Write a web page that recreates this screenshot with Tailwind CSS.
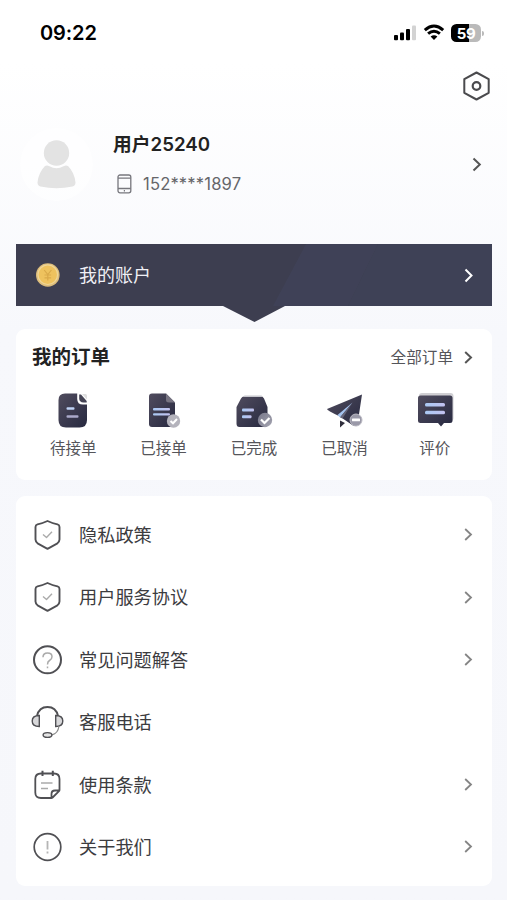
<!DOCTYPE html>
<html lang="zh-CN">
<head>
<meta charset="utf-8">
<meta name="viewport" content="width=device-width, initial-scale=1">
<title>我的</title>
<script src="https://cdn.jsdelivr.net/npm/@tailwindcss/browser@4"></script>
</head>
<body class="h-[900px] w-[507px] overflow-hidden bg-[#f6f7fb] font-['Inter','Noto_Sans_CJK_SC',sans-serif] text-[#333]">
<svg class="absolute h-0 w-0" aria-hidden="true">
  <defs>
    <linearGradient id="dark" x1="0" y1="0" x2="1" y2="1"><stop offset="0" stop-color="#504c5e"/><stop offset="1" stop-color="#272940"/></linearGradient>
    <linearGradient id="line" x1="0" y1="0" x2="1" y2="0"><stop offset="0" stop-color="#a9c9f3"/><stop offset="1" stop-color="#c3c2ef"/></linearGradient>
    <linearGradient id="badge" x1="0" y1="0" x2="1" y2="1"><stop offset="0" stop-color="#77778a"/><stop offset="1" stop-color="#a5a5b1"/></linearGradient>
  </defs>
</svg>
<div class="flex h-full flex-col bg-linear-to-b from-white from-[7%] via-[#f7f8fc] via-[37%] to-[#f6f7fb]">
  <header class="flex h-[66px] shrink-0 items-center justify-between pl-10 pr-[23px]">
    <div class="text-[20px] leading-6 font-semibold tracking-[-0.1px] text-black">09:22</div>
    <div class="flex items-center">
      <svg class="h-[18px] w-[24px]" viewBox="0 0 24 18"><rect x="1" y="11" width="4" height="5.2" rx="1"/><rect x="7" y="8.5" width="4" height="7.7" rx="1"/><rect x="13" y="5" width="4" height="11.2" rx="1"/><rect x="19" y="1.5" width="4" height="14.7" rx="1" fill="#d3d3d3"/></svg>
      <svg class="ml-[6px] h-[18px] w-[22px]" viewBox="0 0 22 18" fill="none" stroke="#000" stroke-width="3"><path d="M1.8 6.1Q11-2 20.2 6.1M5.1 9.7Q11 4.8 16.9 9.7"/><path d="M7.6 12.5Q11 9.8 14.4 12.5L11 16Z" fill="#000" stroke="none"/></svg>
      <div class="ml-[6px] flex h-[18px] w-[30px] items-center justify-center rounded-[5.5px] bg-linear-to-r from-black from-[59%] to-[#bababa] to-[59%] text-[15px] font-bold leading-none tracking-[-0.3px] text-white">59</div>
      <div class="ml-px h-[5px] w-[2px] rounded-r-full bg-[#bababa]"></div>
    </div>
  </header>

  <div class="flex h-[40px] shrink-0 items-center justify-end pr-[16px]">
    <svg class="h-[30px] w-[29px]" viewBox="0 0 29 30" fill="none" stroke="#4a4a4d" stroke-width="2" stroke-linejoin="round"><path d="M14.5 1.5L26.7 8.2V21.8L14.5 28.5L2.3 21.8V8.2Z"/><circle cx="14.5" cy="15" r="3.8" stroke-width="2.2"/></svg>
  </div>

  <section class="flex h-[138px] shrink-0 items-start pl-[20px] pr-[22px] pt-[22px]">
    <div class="flex h-[73px] w-[73px] items-center justify-center rounded-full bg-white/60">
      <svg class="h-[50px] w-[40px]" viewBox="0 0 40 50" fill="#e3e3e3"><circle cx="19.5" cy="13" r="12.7"/><path d="M8 26Q10 25 12.5 26.2Q19.5 30.5 26.5 26.2Q29 25 31 26Q37.5 32.5 38.5 42.5Q38.5 45.5 35.5 46.5Q19.5 50 3.5 46.5Q.5 45.5 .5 42.5Q1.5 32.5 8 26Z"/></svg>
    </div>
    <div class="ml-5 flex grow flex-col pt-[3px]">
      <div class="text-[18.7px] font-semibold leading-7 tracking-[0.05px] text-[#222]">用户25240</div>
      <div class="mt-[11px] flex h-[28px] items-center">
        <svg class="ml-[4px] h-5 w-[15px]" viewBox="0 0 15 20" fill="none" stroke="#77777d" stroke-width="1.3"><rect x="1" y="1" width="12.8" height="17.8" rx="2"/><path d="M1 4.2H13.8M1 14.5H13.8"/><path d="M6.8 16.7H8" stroke-width="1.6"/></svg>
        <span class="ml-[11px] text-[16.6px] leading-6 tracking-[0.15px] text-[#66666a]">152****1897</span>
      </div>
    </div>
    <svg class="mt-[29px] h-[15px] w-[16px]" viewBox="0 0 16 15" fill="none" stroke="#555" stroke-width="2"><path d="M4.5 1.5L10.8 7.5L4.5 13.5"/></svg>
  </section>

  <section class="relative mx-4 h-[62px] shrink-0">
    <svg class="absolute left-0 top-0 h-[78px] w-[476px]" viewBox="0 0 476 78"><path d="M0 0H476V62H269L238.5 78L207 62H0Z" fill="#3d3e50"/><path d="M290 0H362L332 62H257Z" fill="#41435a" opacity=".65"/><path d="M362 0H476V62H332Z" fill="#40455a" opacity=".6"/></svg>
    <div class="relative flex h-full items-center pl-[19px] pr-[15px]">
      <svg class="h-[26px] w-[26px]" viewBox="0 0 26 26"><circle cx="12.8" cy="13" r="11.8" fill="#ddbd7c"/><circle cx="12.8" cy="12.7" r="9.8" fill="#eec25e" stroke="#efd697" stroke-width="1.2"/><path d="M9.2 8L12.8 12.5L16.4 8M12.8 12.5V18.5M9.5 13H16.1M9.5 15.8H16.1" fill="none" stroke="#d9a94a" stroke-width="1.2"/></svg>
      <span class="ml-[18px] grow pt-[2px] text-[18px] leading-7 text-[#f0f0f6]">我的账户</span>
      <svg class="h-[15px] w-[16px]" viewBox="0 0 16 15" fill="none" stroke="#fff" stroke-width="2"><path d="M5.5 1.5L11.5 7.5L5.5 13.5"/></svg>
    </div>
  </section>

  <section class="ml-4 mr-[15px] mt-[23px] h-[151px] shrink-0 rounded-[9px] bg-white px-[12px]">
    <div class="flex h-[56px] items-center pl-[4px] pr-[4px]">
      <h2 class="grow text-[19.5px] font-bold leading-7 text-[#222]">我的订单</h2>
      <span class="pt-px text-[15.6px] leading-6 text-[#55555a]">全部订单</span>
      <svg class="ml-[7px] h-[15px] w-[16px]" viewBox="0 0 16 15" fill="none" stroke="#555" stroke-width="2"><path d="M5.2 2L11 7.5L5.2 13"/></svg>
    </div>
    <div class="grid grid-cols-5 text-center text-[15.5px] leading-6 text-[#55555a]">
      <div class="flex flex-col items-center gap-1 pt-[4px]">
        <svg class="h-[44px] w-[44px]" viewBox="0 0 44 44"><path d="M14 4.5H30Q36 7 36 13V31Q36 38.5 28.5 38.5H15Q7.5 38.5 7.5 31V11Q7.5 4.5 14 4.5Z" fill="url(#dark)"/><path d="M26.2 4H36.5V15.5H32Q26.2 15.5 26.2 10Z" fill="#fff"/><path d="M28.2 5.5H30L35.7 12V13.6H32.5Q28.2 13.2 28.2 9.5Z" fill="#454455"/><path d="M31 5H34.5Q36 5 36 6.5V10.5Z" fill="#dededf"/><rect x="15.5" y="18.3" width="8" height="2.4" rx="1" fill="#bfd2f5"/><rect x="15.5" y="26.3" width="12" height="2.4" rx="1" fill="#aaa9ca"/></svg>
        <span>待接单</span>
      </div>
      <div class="flex flex-col items-center gap-1 pt-[4px]">
        <svg class="h-[44px] w-[44px]" viewBox="0 0 44 44"><path d="M10 4.5H24L33 13.5V35Q33 38 30 38H10Q7 38 7 35V7.5Q7 4.5 10 4.5Z" fill="url(#dark)"/><path d="M24 4.5V11Q24 13.5 27 13.5H33Z" fill="#777482"/><rect x="11" y="19" width="17" height="2.4" rx="1" fill="url(#line)"/><rect x="11" y="24.2" width="17" height="2.4" rx="1" fill="url(#line)"/><circle cx="31.5" cy="32" r="6.7" fill="#b4b3bc"/><path d="M28.5 32L31 34.3L35 30" fill="none" stroke="#fff" stroke-width="2"/></svg>
        <span>已接单</span>
      </div>
      <div class="flex flex-col items-center gap-1 pt-[4px]">
        <svg class="h-[44px] w-[44px]" viewBox="0 0 44 44"><path d="M12 7.5H29Q31 7.5 32 9.5L35.5 18V34.5Q35.5 38 32.5 38H7.5Q4.5 38 4.5 34.5V18L9 9.5Q10 7.5 12 7.5Z" fill="url(#dark)"/><path d="M11 8L12.5 6.5H29.5L31 8Z" fill="#c8c8ce"/><rect x="10" y="19.5" width="12" height="3" rx="1" fill="url(#line)"/><rect x="10" y="26.3" width="9.5" height="3" rx="1" fill="url(#line)"/><circle cx="33" cy="31" r="7.2" fill="url(#badge)"/><path d="M29 30.5L32.5 34L37.5 29" fill="none" stroke="#fff" stroke-width="2.2"/></svg>
        <span>已完成</span>
      </div>
      <div class="flex flex-col items-center gap-1 pt-[4px]">
        <svg class="h-[44px] w-[44px]" viewBox="0 0 44 44"><path d="M40 5.5L5 20Q5 21.5 17 27L31 36.5Q35 38.5 35.7 34Z" fill="url(#dark)"/><path d="M30.5 13.5L15.5 26L18 28.5Z" fill="#a5c3ee"/><path d="M30.5 13.5L18 28.5L20.5 29.5Z" fill="#666579"/><path d="M18 31.5L23 34L18 38.5Z" fill="#302f3d"/><circle cx="34" cy="31" r="6" fill="#9a99a8" stroke="#bcbbc4"/><rect x="30" y="29.5" width="8" height="2.8" rx=".6" fill="#fff"/></svg>
        <span>已取消</span>
      </div>
      <div class="flex flex-col items-center gap-1 pt-[4px]">
        <svg class="h-[44px] w-[44px]" viewBox="0 0 44 44"><rect x="6" y="4" width="34.5" height="28" rx="3" fill="#d0cfd3"/><path d="M7.5 6.5H37Q39.5 6.5 39.5 9V31.5Q39.5 34 37 34H31L28 37.5L25 34H7.5Q5 34 5 31.5V9Q5 6.5 7.5 6.5Z" fill="url(#dark)"/><rect x="12" y="14" width="20" height="3.6" rx="1.5" fill="url(#line)"/><rect x="12" y="21.7" width="20" height="3.6" rx="1.5" fill="url(#line)"/></svg>
        <span>评价</span>
      </div>
    </div>
  </section>

  <nav class="ml-4 mr-[15px] mt-4 h-[390px] shrink-0 rounded-[9px] bg-white py-[7.8px] text-[18.2px] leading-7 text-[#3c3c3f]">
    <div class="flex h-[62.4px] items-center pl-[15px] pr-[16px]">
      <svg class="h-8 w-8" viewBox="0 0 32 32" fill="none" stroke="#505054" stroke-width="1.9" stroke-linejoin="round"><path d="M16.5 2Q21.5 4.3 26.5 5.4Q28.5 6 28.5 8V20.5Q28.5 23 26 24.7L16.5 29.8L7 24.7Q4.5 23 4.5 20.5V8Q4.5 6 6.5 5.4Q11.5 4.3 16.5 2Z"/><path d="M12 15.5L15.5 18.5L21 12.8" stroke="#aaa" stroke-width="1.4"/></svg>
      <span class="ml-4 grow">隐私政策</span>
      <svg class="h-[15px] w-[16px]" viewBox="0 0 16 15" fill="none" stroke="#858585" stroke-width="1.8"><path d="M5.2 2L11 7.5L5.2 13"/></svg>
    </div>
    <div class="flex h-[62.4px] items-center pl-[15px] pr-[16px]">
      <svg class="h-8 w-8" viewBox="0 0 32 32" fill="none" stroke="#505054" stroke-width="1.9" stroke-linejoin="round"><path d="M16.5 2Q21.5 4.3 26.5 5.4Q28.5 6 28.5 8V20.5Q28.5 23 26 24.7L16.5 29.8L7 24.7Q4.5 23 4.5 20.5V8Q4.5 6 6.5 5.4Q11.5 4.3 16.5 2Z"/><path d="M12 15.5L15.5 18.5L21 12.8" stroke="#aaa" stroke-width="1.4"/></svg>
      <span class="ml-4 grow">用户服务协议</span>
      <svg class="h-[15px] w-[16px]" viewBox="0 0 16 15" fill="none" stroke="#858585" stroke-width="1.8"><path d="M5.2 2L11 7.5L5.2 13"/></svg>
    </div>
    <div class="flex h-[62.4px] items-center pl-[15px] pr-[16px]">
      <svg class="h-8 w-8" viewBox="0 0 32 32" fill="none" stroke="#505054" stroke-width="2"><circle cx="16.5" cy="15.8" r="13.5"/><path d="M12 13.3Q12 9 16.5 9Q21 9 21 12.7Q21 15 18.5 16.5Q16.5 17.7 16.5 20.5M16.5 22.5V24.3" stroke="#aaa" stroke-width="1.5"/></svg>
      <span class="ml-4 grow">常见问题解答</span>
      <svg class="h-[15px] w-[16px]" viewBox="0 0 16 15" fill="none" stroke="#858585" stroke-width="1.8"><path d="M5.2 2L11 7.5L5.2 13"/></svg>
    </div>
    <div class="flex h-[62.4px] items-center pl-[15px] pr-[16px]">
      <svg class="h-8 w-8 overflow-visible" viewBox="0 0 32 32" fill="none" stroke="#505054" stroke-width="1.4"><path d="M6 10Q8 1 16.5 1Q25 1 27 10" stroke-width="2"/><path d="M8.3 9.5V20.5Q1.2 20.5 1.2 15Q1.2 9.5 8.3 9.5ZM24.7 9.5V20.5Q31.8 20.5 31.8 15Q31.8 9.5 24.7 9.5Z" fill="#d8d8da"/><path d="M28 20Q27 27.5 21 28.8" stroke="#888" stroke-width="1.2"/><ellipse cx="16.5" cy="29" rx="4.4" ry="2.4" fill="#e5e5e5"/></svg>
      <span class="ml-4 grow">客服电话</span>
    </div>
    <div class="flex h-[62.4px] items-center pl-[15px] pr-[16px]">
      <svg class="h-8 w-8" viewBox="0 0 32 32" fill="none" stroke="#505054" stroke-width="1.8" stroke-linejoin="round"><path d="M20.5 29H10Q4.3 29 4.3 23.5V10Q4.3 4.5 10 4.5H23Q28.5 4.5 28.5 10V21Q28.5 21.7 28 22.2L21.6 28.5Q21 29 20.5 29ZM20.5 29V25Q20.5 21.5 24 21.5H28.3"/><path d="M11.5 1.8V7M21.8 1.8V7" stroke-width="2"/><path d="M10 14H21.5M10 19.5H17" stroke="#aaa" stroke-width="1.3"/></svg>
      <span class="ml-4 grow">使用条款</span>
      <svg class="h-[15px] w-[16px]" viewBox="0 0 16 15" fill="none" stroke="#858585" stroke-width="1.8"><path d="M5.2 2L11 7.5L5.2 13"/></svg>
    </div>
    <div class="flex h-[62.4px] items-center pl-[15px] pr-[16px]">
      <svg class="h-8 w-8" viewBox="0 0 32 32" fill="none" stroke="#505054" stroke-width="1.7"><circle cx="16.5" cy="16" r="13.3"/><path d="M16.5 10V18.5M16.5 20.5V22.5" stroke="#b5b5b5" stroke-width="1.8"/></svg>
      <span class="ml-4 grow">关于我们</span>
      <svg class="h-[15px] w-[16px]" viewBox="0 0 16 15" fill="none" stroke="#858585" stroke-width="1.8"><path d="M5.2 2L11 7.5L5.2 13"/></svg>
    </div>
  </nav>
</div>
</body>
</html>
